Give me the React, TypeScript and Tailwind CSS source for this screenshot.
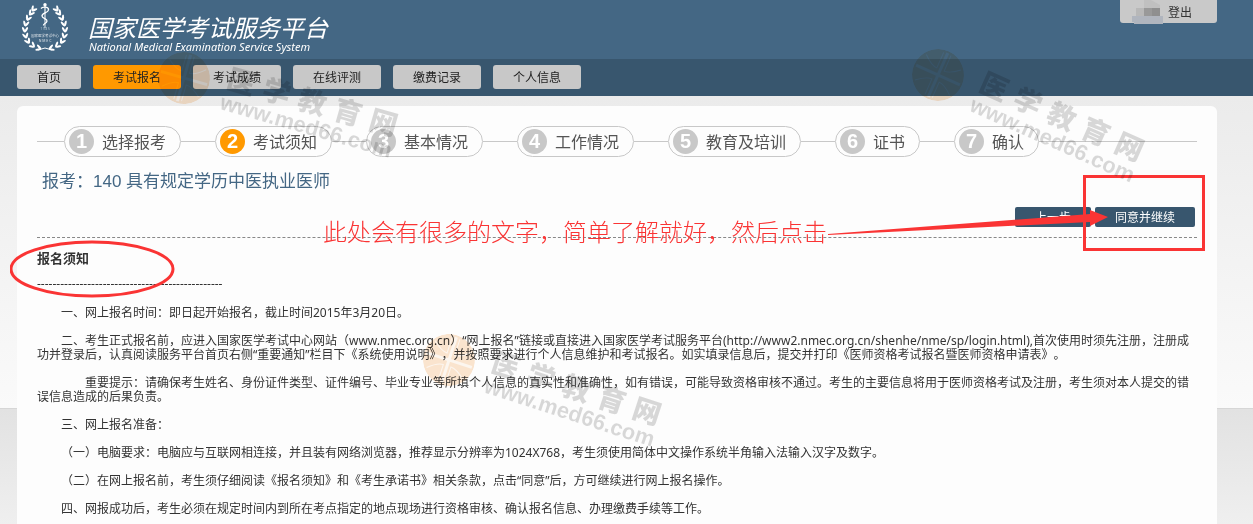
import { useId } from "react";
import { clsx } from "clsx";

const NAV = ["首页", "考试报名", "考试成绩", "在线评测", "缴费记录", "个人信息"];
const STEPS = ["选择报考", "考试须知", "基本情况", "工作情况", "教育及培训", "证书", "确认"];

const LEAVES = [
  [38, 48, 20],
  [32, 45, 38],
  [27.5, 40.5, 58],
  [25.5, 35, 75],
  [25, 29, 92],
  [26, 23, 104],
  [28.5, 17.5, 116],
  [31.5, 12.5, 126],
  [34, 8.5, 130],
];

function Emblem() {
  const branch = LEAVES.map(([x, y, a]) => (
    <g key={y} transform={`translate(${x} ${y}) rotate(${a})`}>
      <ellipse cx="0" cy="-1.5" rx="3" ry="1.1" transform="rotate(28)" />
      <ellipse cx="0" cy="1.5" rx="3" ry="1.1" transform="rotate(-28)" />
    </g>
  ));
  return (
    <svg viewBox="20 0 50 54" className="h-[54px] w-[50px] shrink-0 fill-white" aria-hidden="true">
      {branch}
      <g transform="translate(90 0) scale(-1 1)">{branch}</g>
      <path d="M44.4 5h1.2l-.2 23h-.8z" />
      <circle cx="45" cy="4.8" r="1.7" />
      <path
        d="M41 8.5c2-2.5 8-1.5 7.5 1.5S41.8 13 42 16s5.5 2.5 5 5.2-4 2-3.5 4.3"
        fill="none"
        stroke="white"
        strokeWidth="1.3"
      />
      <text x="45" y="30" textAnchor="middle" fontSize="3" opacity=".6">1 9 8 5</text>
      <text x="45" y="37" textAnchor="middle" fontSize="3.5" opacity=".8">国家医学考试中心</text>
      <text x="45" y="42" textAnchor="middle" fontSize="3.5" opacity=".8">N M E C</text>
      <path d="M38 50l7-2 7 2" fill="none" stroke="white" strokeWidth="1" />
    </svg>
  );
}

function Header() {
  return (
    <header>
      <div className="flex h-[59px] items-start justify-between bg-[#446784] pr-9 pl-5">
        <div className="flex">
          <Emblem />
          <div className="ml-[18px] pt-[15px] text-white italic">
            <h1 className="text-[24px] leading-[26px]">国家医学考试服务平台</h1>
            <p className="pl-px text-[11px] leading-3">National Medical Examination Service System</p>
          </div>
        </div>
        <div className="flex h-[23px] items-center rounded-b-[3px] bg-[#c9c9c9] pr-[25px] pl-3 text-xs text-[#333]">
          <svg viewBox="0 0 31 24" className="mr-[5px] h-6 w-[31px]" aria-hidden="true">
            <path d="M12 0h7l9 5v11H12z" fill="#c0c0c0" />
            <path d="M0 16h31v8H2v-2H0z" fill="#b0b5be" />
            <path d="M4 8h8v8H4z" fill="#b8b8b8" />
            <path d="M12 8h8v8h-8z" fill="#999" />
            <path d="M20 8h8v8h-8z" fill="#8f8f8f" />
          </svg>
          <a href="#logout" className="pt-0.5">
            登出
          </a>
        </div>
      </div>
      <nav className="flex h-[37px] items-center gap-3 bg-[#38566e] pb-px pl-[17px]">
        {NAV.map((label, i) => (
          <a
            key={label}
            href={`#nav-${i}`}
            className={clsx(
              "h-6 rounded-[3px] px-5 text-xs leading-[26px] text-[#222]",
              i === 1 ? "bg-[#ff9900]" : "bg-[#c8c8c8]"
            )}
          >
            {label}
          </a>
        ))}
      </nav>
    </header>
  );
}

function Steps() {
  return (
    <ol className="flex items-center">
      {STEPS.map((label, i) => (
        <li key={label} className="flex shrink-0 items-center">
          <span className={clsx("h-px bg-[#c8c8c8]", i === 0 ? "w-[27px]" : "w-[34px]")} />
          <span className="flex h-[31px] items-center rounded-full border border-[#c8c8c8] pr-[14px] pl-1">
            <span
              className={clsx(
                "size-[25px] rounded-full text-center font-['Liberation_Sans'] text-xl leading-[25px] font-bold text-white",
                i === 1 ? "bg-[#ff9900]" : "bg-[#c8c8c8]"
              )}
            >
              {i + 1}
            </span>
            <span className="ml-2 text-base leading-6 text-[#555]">{label}</span>
          </span>
        </li>
      ))}
      <li className="h-px flex-1 bg-[#c8c8c8]" aria-hidden="true" />
    </ol>
  );
}

/* Red pointer towards the continue button, anchored to the button row. */
function ContinueNote() {
  return (
    <div className="pointer-events-none absolute -top-8 -right-2 flex h-[76px] items-start text-[#fa3434]">
      <p className="mt-[39px] text-2xl leading-9 font-light whitespace-nowrap">
        此处会有很多的文字，简单了解就好，然后点击
      </p>
      <svg viewBox="0 0 378 76" className="h-[76px] w-[378px]" aria-hidden="true">
        <path d="M1 59L263 39v-4l18 7-18 9v-4L1 60z" fill="currentColor" />
        <rect x="257.5" y="1.5" width="119" height="73" fill="none" stroke="currentColor" strokeWidth="3" />
      </svg>
    </div>
  );
}

function Watermark({ className }: { className: string }) {
  const maskId = useId();
  return (
    <div
      className={clsx(
        "pointer-events-none absolute flex origin-[27px_27px] items-center gap-[15px] font-bold text-black/15 mix-blend-multiply select-none",
        className
      )}
      aria-hidden="true"
    >
      <svg viewBox="0 0 54 54" className="size-[54px]">
        <mask id={maskId}>
          <circle cx="27" cy="27" r="26" fill="#fff" />
          <g fill="none" stroke="#000" strokeOpacity=".7">
            <path d="M27 3v48M3 27h48" strokeWidth="3" />
            <path d="M8 13q9 8 15 8V4M46 13q-9 8-15 8V4M8 41q9-8 15-8v17M46 41q-9-8-15-8v17" strokeWidth="1" />
          </g>
        </mask>
        <circle cx="27" cy="27" r="26" fill="#fce6d0" mask={`url(#${maskId})`} />
      </svg>
      <div>
        <div className="flex gap-[9px] text-[28px] leading-[26px] font-black">
          {["医", "学", "教", "育", "网"].map((c) => (
            <span key={c}>{c}</span>
          ))}
        </div>
        <div className="font-['Liberation_Sans'] text-[22px] leading-[26px]">www.med66.com</div>
      </div>
    </div>
  );
}

function Notice() {
  return (
    <article className="mt-[13px] space-y-[14px] text-xs leading-[14px] text-[#333] [text-spacing-trim:space-all]">
      <div className="relative pb-px">
        <h3 className="text-[13px] font-bold">报名须知</h3>
        <p className="mt-3">------------------------------------------------</p>
        <svg
          viewBox="0 0 166 60"
          className="pointer-events-none absolute -top-[11px] -left-[27px] h-[60px] w-[166px]"
          aria-hidden="true"
        >
          <ellipse cx="82" cy="29" rx="81" ry="27" fill="none" stroke="#fa3434" strokeWidth="3" />
        </svg>
      </div>
      <p className="indent-6">一、网上报名时间：即日起开始报名，截止时间2015年3月20日。</p>
      <p className="indent-6">
        二、考生正式报名前，应进入国家医学考试中心网站（www.nmec.org.cn）“网上报名”链接或直接进入国家医学考试服务平台(http://www2.nmec.org.cn/shenhe/nme/sp/login.html),首次使用时须先注册，注册成功并登录后，认真阅读服务平台首页右侧“重要通知”栏目下《系统使用说明》，并按照要求进行个人信息维护和考试报名。如实填录信息后，提交并打印《医师资格考试报名暨医师资格申请表》。
      </p>
      <p className="indent-12">
        重要提示：请确保考生姓名、身份证件类型、证件编号、毕业专业等所填个人信息的真实性和准确性，如有错误，可能导致资格审核不通过。考生的主要信息将用于医师资格考试及注册，考生须对本人提交的错误信息造成的后果负责。
      </p>
      <p className="indent-6">三、网上报名准备：</p>
      <p className="indent-6">
        （一）电脑要求：电脑应与互联网相连接，并且装有网络浏览器，推荐显示分辨率为1024X768，考生须使用简体中文操作系统半角输入法输入汉字及数字。
      </p>
      <p className="indent-6">
        （二）在网上报名前，考生须仔细阅读《报名须知》和《考生承诺书》相关条款，点击“同意”后，方可继续进行网上报名操作。
      </p>
      <p className="indent-6">
        四、网报成功后，考生必须在规定时间内到所在考点指定的地点现场进行资格审核、确认报名信息、办理缴费手续等工作。
      </p>
    </article>
  );
}

export default function App() {
  return (
    <div
      lang="zh-CN"
      className="relative flex min-h-screen flex-col overflow-hidden bg-[linear-gradient(#ebebeb_96px,#fafafa_408px,#d6d6d6_408px,#d6d6d6_409px,#e2e2e2_409px,#efefef_524px)] font-['Noto_Sans','Noto_Sans_CJK_SC',sans-serif]"
    >
      <Header />
      <main className="mt-[10px] mr-9 ml-[17px] flex-1 rounded-t-md bg-[#fdfdfd] px-5 pt-5">
        <Steps />
        <h2 className="mt-[13px] pl-[5px] font-['Liberation_Sans','Noto_Sans_CJK_SC',sans-serif] text-[17px] leading-6 text-[#446784]">
          报考：140 具有规定学历中医执业医师
        </h2>
        <div className="relative mt-[13px] flex justify-end gap-1 border-b border-dashed border-[#888] pr-0.5 pb-[10px] text-xs text-white">
          <button type="button" className="h-5 w-[76px] rounded-xs bg-[#38566e] pt-0.5">
            上一步
          </button>
          <button type="button" className="h-5 w-[100px] rounded-xs bg-[#38566e] pt-0.5">
            同意并继续
          </button>
          <ContinueNote />
        </div>
        <Notice />
      </main>
      <Watermark className="top-[51px] left-[157px] rotate-16" />
      <Watermark className="top-[48px] left-[911px] rotate-24" />
      <Watermark className="top-[333px] left-[422px] rotate-18" />
    </div>
  );
}
